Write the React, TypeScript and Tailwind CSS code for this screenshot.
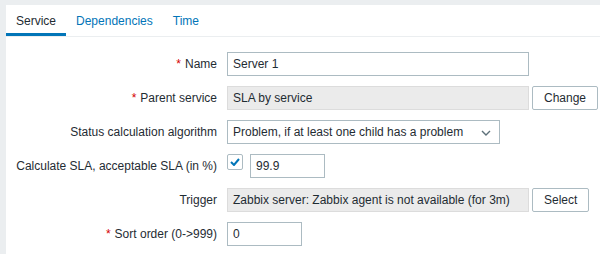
import { ReactNode } from "react";

const inputCls =
  "h-6 border border-[#acbbc2] bg-white px-[5px] text-[12px] text-[#1f2c33] outline-none";
const readonlyCls =
  "h-6 border border-[#dcdcdc] bg-[#ebebeb] px-[5px] flex items-center text-[12px] text-[#1f2c33]";
const btnCls =
  "h-6 px-[11px] border border-[#acbbc2] rounded-[2px] bg-white text-[12px] text-[#1f2c33] flex items-center";

function Row({ label, required, children }: { label: string; required?: boolean; children: ReactNode }) {
  return (
    <div className="grid grid-cols-[221px_1fr] py-[5px]">
      <div className="pr-[10px] h-6 flex items-center justify-end">
        {required && <span className="text-[#d40000] mr-[4px]">*</span>}
        {label}
      </div>
      <div className="flex items-start">{children}</div>
    </div>
  );
}

export default function App() {
  const tabs = ["Service", "Dependencies", "Time"];
  return (
    <div
      className="h-[254px] w-[600px] bg-[#ebeef0] pt-[5px] pl-[6px] overflow-hidden text-[12px] text-[#1f2c33]"
      style={{ fontFamily: '"Liberation Sans", Arial, sans-serif' }}
    >
      <div className="h-full bg-white">
        {/* tabs */}
        <div className="flex h-[32px] border-b border-[#ebeef0]">
          {tabs.map((t, i) => (
            <div
              key={t}
              className={`px-[10px] flex items-center pt-[3px] border-b-[3px] ${
                i === 0 ? "border-[#0275b8] text-[#1f2c33]" : "border-transparent text-[#0275b8]"
              }`}
            >
              {t}
            </div>
          ))}
        </div>

        <div className="pt-[10px]">
          <Row label="Name" required>
            <input className={`${inputCls} w-[302px]`} defaultValue="Server 1" />
          </Row>
          <Row label="Parent service" required>
            <div className={`${readonlyCls} w-[302px]`}>SLA by service</div>
            <button className={`${btnCls} ml-[3px]`}>Change</button>
          </Row>
          <Row label="Status calculation algorithm">
            <div className={`${inputCls} w-[273px] flex items-center justify-between pr-[8px]`}>
              <span>Problem, if at least one child has a problem</span>
              <svg width="10" height="6" viewBox="0 0 10 6" className="mt-[1px]">
                <path d="M1 1l4 4 4-4" fill="none" stroke="#5d7079" strokeWidth="1.4" />
              </svg>
            </div>
          </Row>
          <Row label="Calculate SLA, acceptable SLA (in %)">
            <div className="w-4 h-4 border border-[#acbbc2] bg-white flex items-center justify-center rounded-[2px]">
              <svg width="10" height="8" viewBox="0 0 10 8">
                <path d="M1 4l3 3 5-6" fill="none" stroke="#0275b8" strokeWidth="2" />
              </svg>
            </div>
            <input className={`${inputCls} w-[75px] ml-[7px]`} defaultValue="99.9" />
          </Row>
          <Row label="Trigger">
            <div className={`${readonlyCls} w-[302px]`}>Zabbix server: Zabbix agent is not available (for 3m)</div>
            <button className={`${btnCls} ml-[3px]`}>Select</button>
          </Row>
          <Row label="Sort order (0->999)" required>
            <input className={`${inputCls} w-[75px]`} defaultValue="0" />
          </Row>
        </div>
      </div>
    </div>
  );
}
